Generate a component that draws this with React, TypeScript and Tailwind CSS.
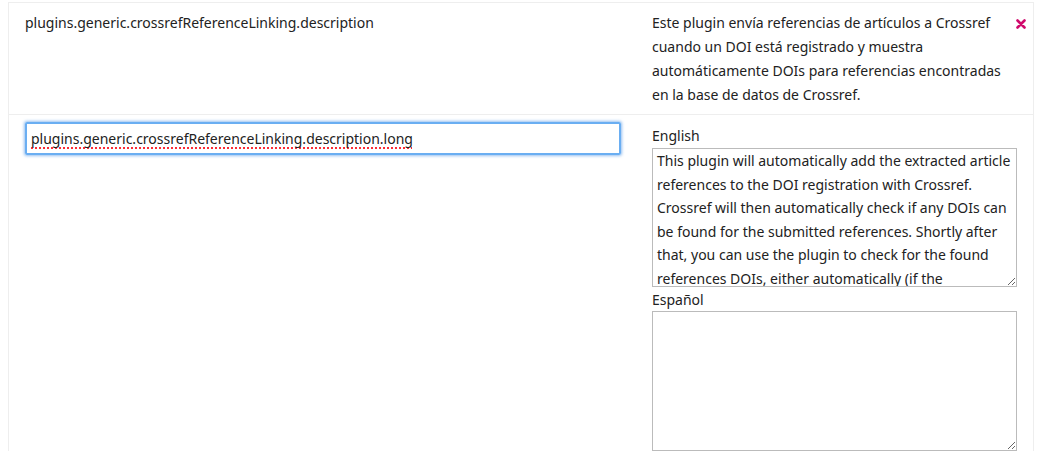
const englishText =
  "This plugin will automatically add the extracted article references to the DOI registration with Crossref. Crossref will then automatically check if any DOIs can be found for the submitted references. Shortly after that, you can use the plugin to check for the found references DOIs, either automatically (if the scheduled tasks are enabled) or manually.";

const CloseIcon = () => (
  <svg width="10" height="10" viewBox="0 0 10 10" aria-hidden="true">
    <path d="M1.5 1.5 L8.5 8.5 M8.5 1.5 L1.5 8.5" stroke="#d00a6c" strokeWidth="2.6" strokeLinecap="round" />
  </svg>
);

export default function App() {
  return (
    <div className="h-[456px] w-[1047px] bg-white pt-[2px] pl-[8px] text-[14px] text-[#222] font-['Noto_Sans',sans-serif] leading-[24px]">
      <div className="w-[1026px] border-l border-r border-t border-[#eeeeee]">
        {/* description row */}
        <div className="grid grid-cols-[627px_1fr] border-b border-[#eeeeee]">
          <div className="px-4 pt-2 pb-[7px]">plugins.generic.crossrefReferenceLinking.description</div>
          <div className="flex items-start justify-between pl-4 pr-[7px] pt-2 pb-[7px]">
            <p className="w-[356px]">
              Este plugin envía referencias de artículos a Crossref cuando un DOI está registrado y muestra
              automáticamente DOIs para referencias encontradas en la base de datos de Crossref.
            </p>
            <button className="mt-[8px] flex h-[10px] w-[10px] items-center justify-center">
              <CloseIcon />
            </button>
          </div>
        </div>

        {/* long description row */}
        <div className="grid grid-cols-[627px_1fr]">
          <div className="px-4 pt-[7px]">
            <div
              role="textbox"
              className="flex h-[33px] w-[596px] items-center rounded-[2px] border-2 border-[#6aaef2] px-[4px] shadow-[0_0_3px_1px_rgba(80,150,230,0.6)]"
            >
              <span className="underline decoration-dotted decoration-red-500 decoration-[1.5px] underline-offset-[4px]">
                plugins.generic.crossrefReferenceLinking.description.long
              </span>
            </div>
          </div>
          <div className="flex flex-col pl-4 pr-4 pt-2">
            <label className="leading-[25px]">English</label>
            <textarea
              readOnly
              defaultValue={englishText}
              className="block h-[139px] w-[365px] resize-y overflow-hidden border border-[#bbbbbb] px-[4px] pt-0 pb-0 leading-[23.5px] outline-none"
            />
            <label className="mt-[1px] leading-[23px]">Español</label>
            <textarea
              readOnly
              defaultValue=""
              className="block h-[140px] w-[365px] resize-y border border-[#bbbbbb] px-[4px] py-0 leading-[24px] outline-none"
            />
          </div>
        </div>
      </div>
    </div>
  );
}
